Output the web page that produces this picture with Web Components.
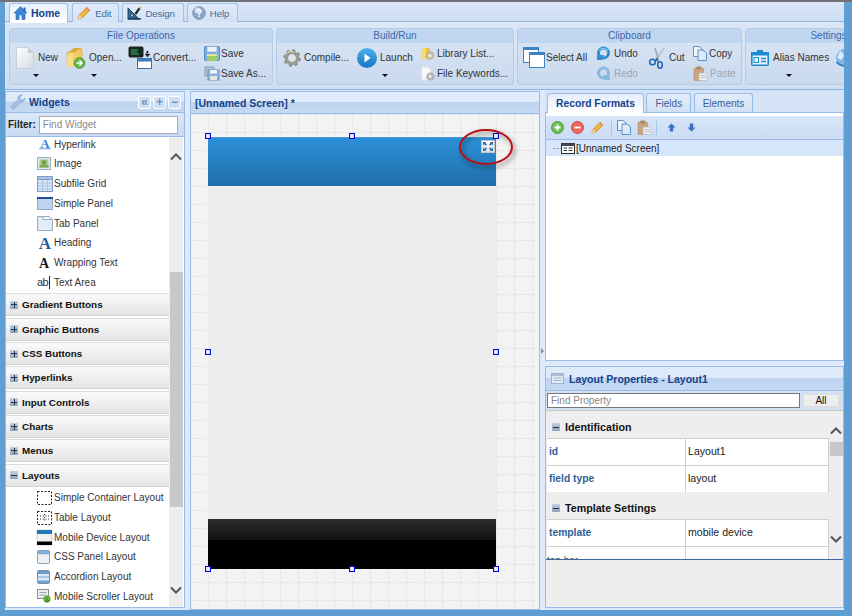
<!DOCTYPE html>
<html><head><meta charset="utf-8"><title>Designer</title>
<style>
html,body{margin:0;padding:0;overflow:hidden;width:852px;height:616px;font:10px "Liberation Sans",Arial,sans-serif;color:#222}
</style></head><body>
<ide-app>
  <tab-strip slot="top">
    <tab-btn active icon="home" label="Home"></tab-btn>
    <tab-btn icon="pencil" label="Edit" r="7"></tab-btn>
    <tab-btn icon="design" label="Design"></tab-btn>
    <tab-btn icon="help" label="Help"></tab-btn>
  </tab-strip>
  <ribbon-bar slot="top">
    <ribbon-group label="File Operations" w="264">
      <rb-large icon="new" label="New" caret="17" w="56" pad="6" gap="4"></rb-large>
      <rb-large icon="open" label="Open..." caret="25" w="63" gap="3"></rb-large>
      <rb-large icon="convert" label="Convert..." w="75" gap="0"></rb-large>
      <rb-col><rb-small icon="save" label="Save"></rb-small><rb-small icon="saveas" label="Save As..."></rb-small></rb-col>
    </ribbon-group>
    <ribbon-group label="Build/Run" w="238">
      <rb-large icon="gear" label="Compile..." w="80" pad="5" gap="2"></rb-large>
      <rb-large icon="launch" label="Launch" caret="25" w="63" gap="3"></rb-large>
      <rb-col><rb-small icon="library" label="Library List..." gap="2"></rb-small><rb-small icon="keywords" label="File Keywords..." gap="2"></rb-small></rb-col>
    </ribbon-group>
    <ribbon-group label="Clipboard" w="225">
      <rb-large icon="selectall" label="Select All" w="78" pad="5" gap="1"></rb-large>
      <rb-col w="52"><rb-small icon="undo" label="Undo" gap="3"></rb-small><rb-small icon="redo" label="Redo" gap="3" off></rb-small></rb-col>
      <rb-large icon="scissors" label="Cut" w="45" gap="3"></rb-large>
      <rb-col><rb-small icon="copy" label="Copy" gap="2"></rb-small><rb-small icon="paste" label="Paste" gap="2" off></rb-small></rb-col>
    </ribbon-group>
    <ribbon-group label="Settings" w="167">
      <rb-large icon="alias" label="Alias Names" caret="35" w="89" pad="5" gap="4"></rb-large>
      <rb-large icon="globe" label="" w="30"></rb-large>
    </ribbon-group>
  </ribbon-bar>
  <widgets-panel slot="left"></widgets-panel>
  <canvas-panel slot="mid"></canvas-panel>
  <right-panel slot="right"></right-panel>
</ide-app>
<script>
const F='"Liberation Sans",Arial,sans-serif';
const ICONS={
home:[13,14,`<path d="M6.500 .5 L0 7 L2 7 V13.500 H5 V9 H8 V13.500 H11 V7 H13 Z" fill="#3f86d8" stroke="#2a62ad" stroke-width=".6"/><rect x="9.500" y="1.500" width="2" height="4" fill="#2a62ad"/>`],
pencil:[15,15,`<path d="M1 14 L2.500 9.500 L10.500 1.500 L13.800 4.500 L5.500 12.700 Z" fill="#f3b541" stroke="#b97a18" stroke-width=".8"/><path d="M1 14 L2.500 9.500 L5.500 12.700 Z" fill="#f6dfb5"/><path d="M10.500 1.500 L13.800 4.500 L12.600 5.800 L9.300 2.700 Z" fill="#e98b6a"/>`],
design:[15,15,`<path d="M1 14 V2 L13 14 Z M4 11.500 H8 L4 7.500 Z" fill="#2d6c9c" fill-rule="evenodd" stroke="#123" stroke-width=".7"/><path d="M8 8 L12.500 1.500 L14.500 3 L10 9.500 Z" fill="#222"/><path d="M12.500 2 L14.300 3.400 L15 .5 Z" fill="#d8b033"/><rect x="1" y="13" width="14" height="1.500" fill="#1f2f55"/>`],
help:[14,14,`<circle cx="7" cy="7" r="6.300" fill="#8aa6c8" stroke="#7d97b8"/><circle cx="5.500" cy="4.500" r="3" fill="#cfdcec"/><text x="7" y="10.500" font-size="10" font-weight="700" font-family="Liberation Sans" text-anchor="middle" fill="#fff">?</text>`],
new:[18,22,`<defs><linearGradient id="g" x1="0" y1="0" x2="1" y2="1"><stop offset="0" stop-color="#fff"/><stop offset="1" stop-color="#d5dbe2"/></linearGradient></defs><path d="M.5 .5 H12 L17.500 6 V21.500 H.5 Z" fill="url(#g)" stroke="#c3c9d0" stroke-width=".8"/><path d="M12 .5 V6 H17.500 Z" fill="#c9ced6"/>`],
open:[20,22,`<path d="M3 5 L8 1 H15 V15 H3 Z" fill="#d9a93a"/><path d="M1 5 H9 L12 2 H16 V18 H1 Z" fill="#f1cb5b" stroke="#d8a93a" stroke-width=".6"/><path d="M1 8 L7 6 V20 L1 20 Z" fill="#f7dd85"/><circle cx="13.500" cy="16" r="5.300" fill="#6cb845" stroke="#4e9a33"/><path d="M10.500 16 H15.500 M13.500 13.500 L16 16 L13.500 18.500" fill="none" stroke="#fff" stroke-width="1.500"/>`],
convert:[24,22,`<rect x="0" y="0" width="14" height="10" rx="1" fill="#142a22" stroke="#222"/><path d="M2 3 H9 M2 5 H8 M2 7 H10" stroke="#37b35f"/><path d="M17 6 H19 V4 H18 M16 7 L18.500 10 L21 7 Z" fill="#222" stroke="#222" stroke-width=".5"/><rect x="8.500" y="11.500" width="14" height="10" fill="#fff" stroke="#3b6fa8"/><rect x="8.500" y="11.500" width="14" height="2.500" fill="#3d84c6" stroke="#3b6fa8"/>`],
save:[16,15,`<rect x=".5" y=".5" width="15" height="14" rx="1" fill="#7cb0e0" stroke="#5a8dbf"/><rect x="3" y=".5" width="10" height="5.500" fill="#eef4fb" stroke="#7aa0c8" stroke-width=".6"/><rect x="3" y="8" width="10" height="6.500" fill="#dfe6a8"/><rect x="3" y="10" width="10" height="4.500" fill="#9ecb67"/>`],
saveas:[16,15,`<rect x="1" y="1" width="9" height="9" fill="#a9bfd8" stroke="#8aa2bd"/><rect x="4" y="4" width="11" height="10" fill="#8fb2d6" stroke="#7793b2"/><rect x="6" y="4" width="7" height="3.500" fill="#eef4fb"/><rect x="6" y="10" width="7" height="4" fill="#e3e8ee"/>`],
gear:[20,22,`<circle cx="10" cy="11" r="7" fill="none" stroke="#8a8a80" stroke-width="3.500" stroke-dasharray="2.800 2.700"/><circle cx="10" cy="11" r="5.500" fill="none" stroke="#9b9b90" stroke-width="3.500"/><circle cx="10" cy="11" r="3.500" fill="#dde5ee"/><path d="M5 6 A7 7 0 0 1 12 5" fill="none" stroke="#cfcfc5" stroke-width="1.300"/>`],
launch:[20,20,`<defs><linearGradient id="l" x1="0" y1="0" x2="0" y2="1"><stop offset="0" stop-color="#4fb2ee"/><stop offset="1" stop-color="#1673c5"/></linearGradient></defs><circle cx="10" cy="10" r="10" fill="url(#l)"/><path d="M7.500 5.500 L13.500 10 L7.500 14.500 Z" fill="#fff"/>`],
library:[15,15,`<path d="M3 2 H10 V13 H1 Z" fill="#e9c453"/><path d="M2 3 L6 1 V13 H1 Z" fill="#f4d96f"/><circle cx="10" cy="9.500" r="3.800" fill="#c9c3a2" stroke="#a59f84" stroke-dasharray="1.500 1"/><circle cx="10" cy="9.500" r="1.500" fill="#eee"/>`],
keywords:[15,15,`<path d="M1.500 1 H8 L11 4 V14 H1.500 Z" fill="#f7f8fa" stroke="#d7dbe1" stroke-width=".7"/><circle cx="10.300" cy="10.500" r="3.600" fill="#b8b8b0" stroke="#999" stroke-dasharray="1.500 1"/><circle cx="10.300" cy="10.500" r="1.400" fill="#eee"/>`],
selectall:[22,21,`<rect x=".5" y=".5" width="15" height="15" fill="#fff" stroke="#3d84c6"/><rect x=".5" y=".5" width="15" height="2.500" fill="#3d84c6"/><rect x="6.500" y="5.500" width="15" height="15" fill="#fff" stroke="#3d84c6"/><rect x="6.500" y="5.500" width="15" height="2.500" fill="#3d84c6"/>`],
undo:[15,15,`<circle cx="7.500" cy="7" r="5" fill="none" stroke="#2e8fd2" stroke-width="3"/><path d="M1 9 L8 9 L6 14 H1 Z" fill="#2e8fd2"/><path d="M3 5 A5 5 0 0 1 12 5" fill="none" stroke="#9fd2f2" stroke-width="1"/>`],
redo:[15,15,`<circle cx="7.500" cy="7" r="5" fill="none" stroke="#86bbdd" stroke-width="3"/><path d="M14 9 L7 9 L9 14 H14 Z" fill="#86bbdd"/>`],
scissors:[18,22,`<path d="M16 1 L7.500 13 M7 1 L10.500 13" stroke="#9ba8b5" stroke-width="1.600" fill="none"/><path d="M16 1 L10 9" stroke="#e1e6eb" stroke-width=".7"/><circle cx="4.500" cy="15" r="2.800" fill="none" stroke="#2367b5" stroke-width="1.600"/><ellipse cx="12" cy="18" rx="2.300" ry="3.200" fill="none" stroke="#2367b5" stroke-width="1.600"/><path d="M7 14 L9 12 L10 15" fill="none" stroke="#2367b5" stroke-width="1.400"/>`],
copy:[14,15,`<path d="M.5 .5 H6 L9 3 V10.500 H.5 Z" fill="#eef5fd" stroke="#5f8fc5"/><path d="M5 4 H10 L13.500 7 V14.500 H5 Z" fill="#dce9f9" stroke="#5f8fc5"/>`],
paste:[15,15,`<rect x="1" y="2" width="9.500" height="12.500" rx="1" fill="#c8a780" stroke="#b18e67" stroke-width=".6"/><rect x="3.500" y=".5" width="4.500" height="3" fill="#a58a68"/><path d="M6 7 H14 V14.500 H6 Z" fill="#edf0f3" stroke="#b0b7bf" stroke-width=".6"/><path d="M7.500 9.500 H12.500 M7.500 11.500 H12.500" stroke="#aab2bb" stroke-width=".8"/>`],
alias:[18,16,`<rect x=".8" y="2.800" width="16.400" height="12.400" rx="1" fill="#e9f3fb" stroke="#1e8ad0" stroke-width="1.600"/><rect x="0" y="2" width="18" height="3.500" fill="#1e8ad0"/><rect x="6" y="0" width="6" height="3" fill="#1e8ad0"/><rect x="3" y="7.500" width="4.500" height="5" fill="none" stroke="#1e8ad0"/><path d="M10 8.500 H15 M10 11.500 H15" stroke="#1e8ad0" stroke-width="1.300"/>`],
globe:[20,22,`<circle cx="10" cy="11" r="9" fill="#7fb7e8"/><path d="M5 4 C9 6 10 9 7 12 C5 14 4 11 2 11 Z M11 14 C14 12 17 12 17 15 C15 18 12 19 11 14 Z" fill="#dfeaf4"/><path d="M1.500 15 C6 20 14 21 18.500 13" stroke="#2479bd" stroke-width="1.500" fill="none"/>`],
wrench:[16,16,`<path d="M1.800 14.200 C1 13.400 1 12.500 1.800 11.700 L8 6 C7.200 3.500 9 .8 12 1 L9.800 3.200 L10.500 5.500 L12.800 6.200 L15 4 C15.200 7 12.500 8.800 10 8 L4.300 14.200 C3.500 15 2.600 15 1.800 14.200 Z" fill="#a9c1e6" stroke="#7f9dce" stroke-width=".7"/>`],
a_blue:[16,14,`<text x="8" y="10.500" text-anchor="middle" font-family="Liberation Serif" font-weight="700" font-size="13" fill="#3d7fe0">A</text><rect x="2" y="11" width="12" height="1.300" fill="#8db7f0"/>`],
image:[14,13,`<rect x=".5" y=".5" width="13" height="12" fill="#dfe8f3" stroke="#99aec8"/><rect x="2.500" y="2.500" width="9" height="8" fill="#a6c98b"/><circle cx="7" cy="5.500" r="2.200" fill="#6f9c3e"/><rect x="2.500" y="8" width="9" height="2.500" fill="#7da94d"/>`],
grid:[16,16,`<rect x=".5" y=".5" width="15" height="15" fill="#dbe6f4" stroke="#7e9cc5"/><rect x=".5" y=".5" width="15" height="3" fill="#a9c3e4" stroke="#7e9cc5"/><path d="M5.500 4 V15 M10.500 4 V15 M1 7 H15 M1 10 H15 M1 13 H15" stroke="#a9c3e4"/>`],
panel:[16,13,`<rect x=".5" y=".5" width="15" height="12" fill="#bcd4ee" stroke="#97a9c0"/><rect x="0" y="0" width="16" height="2" fill="#1f4f8f"/>`],
tabpanel:[16,15,`<path d="M.5 .5 H6 V3.500 H15.500 V14.500 H.5 Z M6 .5 H12 L15.500 3.500" fill="#e3edf9" stroke="#9aabc0"/>`],
a_head:[16,16,`<text x="8" y="14" text-anchor="middle" font-family="Liberation Serif" font-weight="700" font-size="17" fill="#1f5c9a">A</text>`],
a_black:[14,13,`<text x="7" y="11.500" text-anchor="middle" font-family="Liberation Serif" font-weight="700" font-size="14" fill="#1a1a1a">A</text>`],
abi:[16,14,`<text x="0" y="11" font-family="Liberation Sans" font-size="11" letter-spacing="-.5" fill="#333">ab</text><rect x="12" y="1" width="1" height="13" fill="#222"/>`],
dash:[16,14,`<rect x=".5" y=".5" width="14" height="13" fill="#fff" stroke="#222" stroke-dasharray="2 1.500"/>`],
dasht:[16,14,`<rect x=".5" y=".5" width="14" height="13" fill="#fff" stroke="#222" stroke-dasharray="2 1.500"/><path d="M3 5 H12 M3 8 H12 M7.500 3 V11" stroke="#222" stroke-dasharray="1 1.700"/>`],
mobile:[15,15,`<rect width="15" height="15" fill="#f1f1f1" stroke="#aaa" stroke-width=".5"/><rect width="15" height="4" fill="#2378b5"/><rect y="11.500" width="15" height="3.500" fill="#000"/>`],
csspanel:[13,14,`<rect x=".5" y=".5" width="12" height="13" rx="1.500" fill="#eceff3" stroke="#8aa0b8"/><rect x=".5" y=".5" width="12" height="3.500" rx="1.500" fill="#80b0dc" stroke="#7898b8" stroke-width=".5"/>`],
accordion:[13,14,`<rect x=".5" y=".5" width="12" height="13" rx="1" fill="#dce8f6" stroke="#7c8ea3"/><rect x="1" y="1" width="11" height="3" fill="#6f9ecb"/><rect x="1" y="6" width="11" height="2" fill="#a8c6e6"/><rect x="1" y="10.500" width="11" height="2.500" fill="#6f9ecb"/>`],
scroller:[16,15,`<rect x=".5" y=".5" width="11" height="9" fill="#eceff3" stroke="#8b8f95"/><path d="M2.500 3.500 H9.500 M2.500 6 H8" stroke="#a0a5ab"/><circle cx="10" cy="10" r="3.700" fill="#6cae3f"/><path d="M10 8 V13 M8 11 L10 13 L12 11" stroke="#3e7c24" stroke-width=".8" fill="none"/>`],
add:[13,13,`<circle cx="6.500" cy="6.500" r="6" fill="#72bd55" stroke="#4f9a3b"/><path d="M3.500 6.500 H9.500 M6.500 3.500 V9.500" stroke="#fff" stroke-width="1.800"/>`],
del:[13,13,`<circle cx="6.500" cy="6.500" r="6" fill="#ea6a5f" stroke="#c9473f"/><path d="M3.500 6.500 H9.500" stroke="#fff" stroke-width="1.800"/>`],
up:[9,9,`<path d="M4.500 .5 L8.500 4.500 H6.200 V8.500 H2.800 V4.500 H.5 Z" fill="#3a6fc4"/>`],
down:[9,9,`<path d="M4.500 8.500 L8.500 4.500 H6.200 V.5 H2.800 V4.500 H.5 Z" fill="#3a6fc4"/>`],
screen:[14,11,`<rect x=".5" y=".5" width="13" height="10" fill="#fff" stroke="#333"/><rect x=".5" y=".5" width="13" height="2.500" fill="#445"/><path d="M2.500 5 H6 M7.500 5 H11.500 M2.500 7.500 H6 M7.500 7.500 H11.500" stroke="#333"/>`],
props:[13,11,`<rect x=".5" y=".5" width="12" height="10" fill="#e2eaf5" stroke="#9fb4d0"/><rect x="1" y="1" width="11" height="2" fill="#a9bfdc"/><path d="M2.500 5 H10.500 M2.500 7.500 H10.500" stroke="#a9bbd3"/>`]
};
let uid=0;
function icon(n,w,h){const [a,b,s]=ICONS[n];const k='i'+(uid++);const t=s.replace(/id="(\w+)"/g,`id="${k}$1"`).replace(/url\(#(\w+)\)/g,`url(#${k}$1)`);return `<svg width="${w||a}" height="${h||b}" viewBox="0 0 ${a} ${b}" style="display:block;flex:none;overflow:visible" aria-hidden="true">${t}</svg>`}
function def(name,css,html){customElements.define(name,class extends HTMLElement{connectedCallback(){if(this.shadowRoot)return;const r=this.attachShadow({mode:'open'});const h=typeof html==='function'?html(this):html;r.innerHTML=`<style>${css}</style>${h}`}})}
const at=(e,a,d='')=>e.getAttribute(a)??d;

def('ide-app',`:host{display:flex;flex-direction:column;box-sizing:border-box;border-top:2px solid #6e7178;padding:0 8px 6px 5px;width:852px;height:616px;background:#5f9ed3;font:10px ${F};color:#222;overflow:hidden}
.main{flex:1;display:flex;min-height:0;background:#dfe9f9}
.l{width:180px;flex:none;display:flex}.d{width:5px;flex:none;display:flex;align-items:center;justify-content:center}.m{width:350px;flex:none;display:flex}.r{flex:1;min-width:0;display:flex}`,
`<slot name="top"></slot><div class="main"><div class="l"><slot name="left"></slot></div><div class="d"></div><div class="m"><slot name="mid"></slot></div><div class="d"><svg width="3" height="6" viewBox="0 0 3 6" style="margin-top:2px"><path d="M0 0 L3 3 L0 6 Z" fill="#7f93ab"/></svg></div><div class="r"><slot name="right"></slot></div></div>`);

def('tab-strip',`:host{display:flex;height:18px;padding:1px 0 0 4px;gap:3px;background:linear-gradient(#d9e6f7,#cedff3);border-bottom:1px solid #8db3e3;flex:none}`,`<slot></slot>`);
def('tab-btn',`:host{display:flex;align-items:center;gap:4px;height:18px;box-sizing:content-box;padding:0 8px 0 4px;border:1px solid #a5c0e2;border-bottom:none;border-radius:3px 3px 0 0;background:linear-gradient(#dfeafa,#d2e2f6);color:#4a6a95;font-size:9.7px;letter-spacing:-.12px}
:host([active]){background:linear-gradient(#e8f1fc,#fff);color:#15428b;font-weight:700;font-size:10.5px;letter-spacing:0;margin-bottom:-1px;padding:0 7px 1px 4px;height:18px;margin-right:1px;z-index:1}`,
e=>{if(at(e,'r'))e.style.paddingRight=at(e,'r')+'px';const n=at(e,'icon');return icon(n,n==='home'?13:14,14)+`<span>${at(e,'label')}</span>`});

def('ribbon-bar',`:host{display:flex;height:68px;box-sizing:border-box;padding:6px 0 0 4px;gap:3px;background:linear-gradient(#dbe7f7,#cfdff2);border-bottom:1px solid #8db3e3;overflow:hidden;flex:none}`,`<slot></slot>`);
def('ribbon-group',`:host{display:flex;flex-direction:column;height:57px;box-sizing:border-box;border:1px solid #b7cbe4;border-radius:3px;background:linear-gradient(#dbe6f5,#c9d9ee);flex:none;overflow:hidden}
.t{height:14px;line-height:14px;text-align:center;background:#c1d6f0;color:#3a67ad;font-size:10px;flex:none}
.b{flex:1;display:flex;min-height:0}`,
e=>{e.style.width=at(e,'w')+'px';return `<div class="t">${at(e,'label')}</div><div class="b"><slot></slot></div>`});
def('rb-large',`:host{display:block;box-sizing:border-box;flex:none;color:#333}
.r{display:flex;align-items:center;height:27px;margin-top:1px;white-space:nowrap}
.c{width:0;height:0;border:3px solid transparent;border-top:3px solid #111;border-bottom:none;margin-top:3px}`,
e=>{e.style.width=at(e,'w')+'px';e.style.paddingLeft=at(e,'pad','0')+'px';const c=at(e,'caret');return `<div class="r" style="gap:${at(e,'gap','4')}px">${icon(at(e,'icon'))}<span>${at(e,'label')}</span></div>`+(c?`<div class="c" style="margin-left:${c}px"></div>`:'')});
def('rb-col',`:host{display:flex;flex-direction:column;flex:none;padding-top:2px;gap:3px;box-sizing:border-box}`,e=>{if(at(e,'w'))e.style.width=at(e,'w')+'px';return `<slot></slot>`});
def('rb-small',`:host{display:flex;align-items:center;height:17px;white-space:nowrap;color:#333}:host([off]){color:#9aa6b4}`,
e=>{e.style.gap=at(e,'gap','1')+'px';return icon(at(e,'icon'))+`<span>${at(e,'label')}</span>`});

def('panel-head',`:host{display:flex;align-items:center;gap:3px;flex:none;box-sizing:border-box;border-bottom:1px solid #99bbe8;background:linear-gradient(#dfeafb 0,#dfeafb 45%,#bdd3ef 50%,#c5d9f2 100%);font-weight:700;font-size:10.5px;color:#15428b}`,`<slot></slot>`);
def('mini-btn',`:host{display:flex;align-items:center;justify-content:center;width:13px;height:13px;box-sizing:border-box;border:1px solid #fff;border-radius:2px;background:#cfe0f4;color:#6d8fc0;font:700 12px ${F};line-height:1}`,`<slot></slot>`);
def('plus-box',`:host{display:flex;align-items:center;justify-content:center;width:8px;height:8px;box-sizing:border-box;background:linear-gradient(#c4d0e0,#8fa3bd);border-radius:1px;flex:none}
i{display:block;width:6px;height:1px;background:#23344d;position:relative}
i.p::after{content:"";position:absolute;left:2.500px;top:-2.500px;width:1px;height:6px;background:#23344d}`,
e=>`<i class="${e.hasAttribute('minus')?'':'p'}"></i>`);
def('acc-head',`:host{display:flex;align-items:center;gap:4px;height:23px;box-sizing:border-box;padding-left:4px;margin-bottom:1.33px;border-top:1px solid #dcdcdc;border-bottom:1px solid #d2d2d2;background:linear-gradient(#fafafa,#e4e4e4);font:700 9.9px ${F};color:#111;flex:none}`,
e=>`<plus-box ${e.hasAttribute('open')?'minus':''}></plus-box><span>${at(e,'label')}</span>`);
def('acc-item',`:host{display:flex;align-items:center;height:19.7px;padding-left:31px;flex:none;color:#333;white-space:nowrap;font-size:10px}
.i{width:17px;display:flex;justify-content:flex-start;flex:none}`,
e=>`<span class="i">${icon(at(e,'icon'))}</span><span>${at(e,'label')}</span>`);
def('v-scroll',`:host{display:flex;flex-direction:column;align-items:stretch;background:#eee;flex:none;box-sizing:border-box;width:14px;position:relative}
.ch{position:absolute;left:1px}
.th{position:absolute;left:1px;right:0;background:#c8c8c8}`,
e=>`<svg class="ch" style="top:${at(e,'up')}px" width="12" height="8" viewBox="0 0 12 8"><path d="M1 6.500 L6 1.500 L11 6.500" fill="none" stroke="#555" stroke-width="2"/></svg><div class="th" style="top:${at(e,'ts')}px;height:${at(e,'th')}px"></div><svg class="ch" style="top:${at(e,'down')}px" width="12" height="8" viewBox="0 0 12 8"><path d="M1 1.500 L6 6.500 L11 1.500" fill="none" stroke="#555" stroke-width="2"/></svg>`);

def('widgets-panel',`:host{display:flex;flex-direction:column;flex:1;margin:1px 0 2px;border:1px solid #99bbe8;box-sizing:border-box;background:#fff;min-width:0}
panel-head{height:21px;padding-left:4px}
.sp{flex:1}.b{display:flex;gap:2px;margin-right:3px}
.f{display:flex;align-items:center;height:24px;box-sizing:border-box;flex:none;padding-left:2px;gap:3px;background:linear-gradient(#dae7f8,#c9dcf3);border-bottom:1px solid #99bbe8;font-weight:700;color:#222;font-size:10px}
input{width:139px;height:18px;box-sizing:border-box;border:1px solid #a9a9c0;font:10px ${F};padding:0 3px;margin:0;background:#fff;color:#888}
input::placeholder{color:#8a8a8a}
.c{flex:1;display:flex;min-height:0}.list{flex:1;overflow:hidden;display:flex;flex-direction:column;min-width:0}
.in{margin-top:-2.600px;display:flex;flex-direction:column}
.s{height:1.500px;flex:none}`,
()=>`<panel-head>${icon('wrench')}<span>Widgets</span><span class="sp"></span><span class="b"><mini-btn>«</mini-btn><mini-btn>+</mini-btn><mini-btn>−</mini-btn></span></panel-head>
<div class="f"><span>Filter:</span><input placeholder="Find Widget"></div>
<div class="c"><div class="list"><div class="in">
${[['a_blue','Hyperlink'],['image','Image'],['grid','Subfile Grid'],['panel','Simple Panel'],['tabpanel','Tab Panel'],['a_head','Heading'],['a_black','Wrapping Text'],['abi','Text Area']].map(x=>`<acc-item icon="${x[0]}" label="${x[1]}"></acc-item>`).join('')}
<div class="s"></div>
${['Gradient Buttons','Graphic Buttons','CSS Buttons','Hyperlinks','Input Controls','Charts','Menus'].map(x=>`<acc-head label="${x}"></acc-head>`).join('')}
<acc-head open label="Layouts"></acc-head>
${[['dash','Simple Container Layout'],['dasht','Table Layout'],['mobile','Mobile Device Layout'],['csspanel','CSS Panel Layout'],['accordion','Accordion Layout'],['scroller','Mobile Scroller Layout']].map(x=>`<acc-item icon="${x[0]}" label="${x[1]}"></acc-item>`).join('')}
</div></div><v-scroll up="16" ts="135" th="235" down="449"></v-scroll><div style="width:1px;background:#fff"></div></div>`);

def('canvas-panel',`:host{display:flex;flex-direction:column;flex:1;margin-top:1px;border:1px solid #99bbe8;box-sizing:border-box;background:#f3f3f3;min-width:0}
panel-head{height:22px;padding-left:4px}`,`<panel-head>[Unnamed Screen] *</panel-head><design-canvas></design-canvas>`);

def('sel-handle',`:host{position:absolute;width:6px;height:6px;box-sizing:border-box;border:1.500px solid #0000e0;background:#dfe9f9}`,``);
def('design-canvas',`:host{display:block;flex:1;position:relative;overflow:hidden;background:#f3f3f3}
svg.grid{position:absolute;inset:0;width:100%;height:100%}
.ph{position:absolute;left:17px;top:23px;width:288px;height:432px;display:flex;flex-direction:column;background:#ededed}
.t{height:49px;flex:none;background:linear-gradient(#2c90d8,#1f6ea8);border-top:1px solid #4a9bd5;box-sizing:border-box}
.mid{flex:1}.bt{height:21px;flex:none;background:linear-gradient(#2d2d2d,#121212)}.bb{height:29px;flex:none;background:#000}
.exp{position:absolute;left:290px;top:26px;width:14px;height:13px;background:linear-gradient(#fff,#dfe3e8);border:1px solid #c4c4c4;box-sizing:border-box}
.ring{position:absolute;left:267px;top:15px;overflow:visible}`,
()=>`<svg class="grid" aria-hidden="true"><defs><pattern id="p" width="18" height="18" patternUnits="userSpaceOnUse" x="17" y="0"><path d="M.5 0 V18 M0 .5 H18" stroke="#e4e4e4" stroke-dasharray="4 1.500" fill="none"/></pattern></defs><rect width="100%" height="100%" fill="url(#p)"/></svg>
<div class="ph"><div class="t"></div><div class="mid"></div><div class="bt"></div><div class="bb"></div></div>
<svg class="ring" width="56" height="38" viewBox="0 0 56 38"><defs><filter id="sh" x="-30%" y="-30%" width="170%" height="170%"><feDropShadow dx="2" dy="3" stdDeviation="2.500" flood-color="#000" flood-opacity=".55"/></filter></defs><ellipse cx="28" cy="18" rx="26" ry="17" fill="none" stroke="#b80f12" stroke-width="2" filter="url(#sh)"/></svg>
<div class="exp"><svg width="12" height="11" viewBox="0 0 12 11" style="display:block"><path d="M1 1 H4.500 L3.500 2 L5 3.500 L3.800 4.700 L2.300 3.200 L1 4.500 Z M11 1 H7.500 L8.500 2 L7 3.500 L8.200 4.700 L9.700 3.200 L11 4.500 Z M1 10 H4.500 L3.500 9 L5 7.500 L3.800 6.300 L2.300 7.800 L1 6.500 Z M11 10 H7.500 L8.500 9 L7 7.500 L8.200 6.300 L9.700 7.800 L11 6.500 Z" fill="#3a6fb5"/></svg></div>
${[[17,22],[161,22],[305,22],[17,238],[305,238],[17,455],[161,455],[305,455]].map(p=>`<sel-handle style="left:${p[0]-3}px;top:${p[1]-3}px"></sel-handle>`).join('')}`);

def('right-tab',`:host{display:flex;align-items:center;height:19px;box-sizing:border-box;padding:0 8px;border:1px solid #99bbe8;border-bottom:none;border-radius:3px 3px 0 0;background:linear-gradient(#e3edfb,#d0e0f5);color:#3e5f8e;font-size:10px}
:host([active]){background:linear-gradient(#e3edfb,#fff);color:#15428b;font-weight:700;font-size:10.3px;height:20px;margin-bottom:-1px}`,`<slot></slot>`);
def('prop-row',`:host{display:grid;grid-template-columns:139px 143px;height:27px;box-sizing:border-box;border-top:1px solid #cfcfcf;border-right:1px solid #cfcfcf;background:#fff;flex:none;width:282px;overflow:hidden}
b,span{display:flex;align-items:center;padding:0 0 2px 2px}
b{color:#2f5f97;font-size:10.3px;border-right:1px solid #cfcfcf}span{color:#222;font-size:10.6px}
:host([cut]) b{font-weight:400;color:#555;font-size:10px;align-items:flex-start;padding:8px 0 0 0;}`,
e=>`<b>${at(e,'name')}</b><span>${at(e,'value')}</span>`);
def('prop-sec',`:host{display:flex;align-items:center;gap:5px;height:27px;padding:5px 0 0 5px;flex:none;font:700 10.7px ${F};color:#111;background:#eee;box-sizing:border-box}`,
e=>`<plus-box minus></plus-box><span>${at(e,'label')}</span>`);
def('right-panel',`:host{display:flex;flex-direction:column;flex:1;min-width:0}
.tabs{display:flex;gap:2.500px;padding:3px 0 0 2px;height:23px;box-sizing:border-box;flex:none;background:#d5e3f6;border-bottom:1px solid #99bbe8}
.up{height:248px;flex:none;display:flex;flex-direction:column;border:1px solid #99bbe8;border-top:none;background:#fff;box-sizing:border-box}
.tb{height:24px;flex:none;display:flex;align-items:center;padding-left:5px;gap:7px;background:linear-gradient(#d8e6f8,#c9dcf4);border-bottom:1px solid #99bbe8;margin-top:3px;box-sizing:border-box}
.sep{width:1px;height:14px;background:#a9c4e8}
.tr{height:16px;flex:none;display:flex;align-items:center;background:#d6e6fa;padding-left:7px;color:#222;font-size:10px}
.tr i{width:8px;border-top:1px dotted #999}
.low{flex:1;min-height:0;margin:5px 0 2px;display:flex;flex-direction:column;border:1px solid #99bbe8;box-sizing:border-box;background:#eee}
panel-head{height:24px;padding-left:5px;gap:5px}
.fd{height:20px;display:flex;align-items:center;gap:3px;padding-left:1px;flex:none;background:#d3e1f3;border-bottom:1px solid #c8c8c8;box-sizing:border-box}
input{width:253px;height:15px;box-sizing:border-box;border:1px solid #777;font:10px ${F};padding:0 3px;margin:0;background:#fff}
input::placeholder{color:#888}
.all{width:36px;height:13px;display:flex;align-items:center;justify-content:center;background:#eee;border:1px solid #ddd;color:#111;font-size:10px;box-sizing:border-box}
.body{height:149px;flex:none;overflow:hidden;display:flex;background:#eee;border-bottom:1px solid #3d6a9d;box-sizing:border-box}
.pl{width:283px;flex:none;padding-left:1px;display:flex;flex-direction:column;box-sizing:border-box}
.rest{flex:1}
v-scroll{width:15px}`,
()=>`<div class="tabs"><right-tab active>Record Formats</right-tab><right-tab>Fields</right-tab><right-tab>Elements</right-tab></div>
<div class="up"><div class="tb">${icon('add')}${icon('del')}${icon('pencil',13,13)}<span class="sep"></span><span style="margin-left:-2px">${icon('copy')}</span><span style="margin-left:-1px">${icon('paste')}</span><span class="sep" style="margin-left:-3px"></span><span style="margin-left:3px">${icon('up')}</span><span style="margin-left:4px">${icon('down')}</span></div>
<div class="tr"><i></i>${icon('screen')}<span style="margin-left:1px">[Unnamed Screen]</span></div></div>
<div class="low"><panel-head>${icon('props')}<span>Layout Properties - Layout1</span></panel-head>
<div class="fd"><input placeholder="Find Property"><span class="all">All</span></div>
<div class="body"><div class="pl"><prop-sec label="Identification"></prop-sec><prop-row name="id" value="Layout1"></prop-row><prop-row name="field type" value="layout"></prop-row><prop-sec label="Template Settings"></prop-sec><prop-row name="template" value="mobile device"></prop-row><prop-row cut name="top bar" value=""></prop-row></div><v-scroll up="16" ts="31" th="14" down="124"></v-scroll></div>
<div class="rest"></div></div>`);
</script>
</body></html>
